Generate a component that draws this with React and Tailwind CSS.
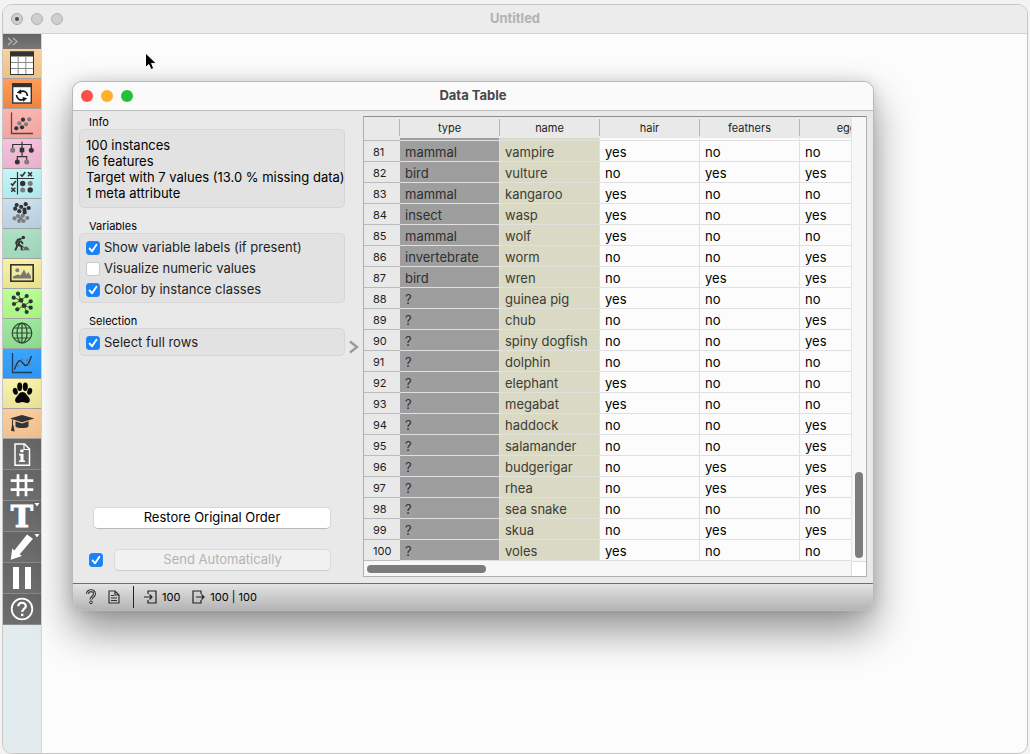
const VARIABLES = ["type", "name", "hair", "feathers", "eggs"];

const ROWS = [
  [81, "mammal", "vampire", "yes", "no", "no"],
  [82, "bird", "vulture", "no", "yes", "yes"],
  [83, "mammal", "kangaroo", "yes", "no", "no"],
  [84, "insect", "wasp", "yes", "no", "yes"],
  [85, "mammal", "wolf", "yes", "no", "no"],
  [86, "invertebrate", "worm", "no", "no", "yes"],
  [87, "bird", "wren", "no", "yes", "yes"],
  [88, "?", "guinea pig", "yes", "no", "no"],
  [89, "?", "chub", "no", "no", "yes"],
  [90, "?", "spiny dogfish", "no", "no", "yes"],
  [91, "?", "dolphin", "no", "no", "no"],
  [92, "?", "elephant", "yes", "no", "no"],
  [93, "?", "megabat", "yes", "no", "no"],
  [94, "?", "haddock", "no", "no", "yes"],
  [95, "?", "salamander", "no", "no", "yes"],
  [96, "?", "budgerigar", "no", "yes", "yes"],
  [97, "?", "rhea", "no", "yes", "yes"],
  [98, "?", "sea snake", "no", "no", "no"],
  [99, "?", "skua", "no", "yes", "yes"],
  [100, "?", "voles", "yes", "no", "no"],
];

const DARK = "#333333";
const GRAY = "#7d7d7d";

function Dots({ points, r, fill }) {
  return points.map(([x, y]) => (
    <circle key={`${x}-${y}`} cx={x} cy={y} r={r} fill={fill} />
  ));
}

const CATEGORIES = [
  {
    label: "Data",
    tone: "from-[#fad09c] to-[#f0c086]",
    icon: (
      <>
        <rect x="7.5" y="3" width="23" height="22.5" fill="#fff" stroke={DARK} />
        <rect x="7" y="2.5" width="24" height="5" fill={DARK} />
        <path d="M15.2 8v17M22.8 8v17M8 13.5h22M8 19.5h22" stroke="#8a8a8a" />
      </>
    ),
  },
  {
    label: "Transform",
    tone: "from-[#ff9d5a] to-[#ee8641]",
    icon: (
      <>
        <rect x="9.7" y="5" width="18.6" height="19" fill="#fff" stroke={DARK} strokeWidth="1.4" />
        <rect x="9" y="4.2" width="20" height="4" fill={DARK} />
        <path
          d="M17 12.8c3.500-1.500 7-.5 7.500 4.200M21 20.200c-3.500 1.500-7 .5-7.500-4.200"
          fill="none"
          stroke="#111"
          strokeWidth="1.700"
        />
        <path d="M17.800 10.200l.6 4.800-4.600-1.300zM20.200 22.800l-.6-4.800 4.600 1.300z" fill="#111" />
      </>
    ),
  },
  {
    label: "Visualize",
    tone: "from-[#fcb5b0] to-[#f3a6a1]",
    icon: (
      <>
        <path d="M8.500 3.500v21h21.500" fill="none" stroke="#6b3d3b" strokeWidth="1.300" />
        <Dots r={2.1} fill={GRAY} points={[[16.3, 14.3], [23, 15.3], [26.3, 10.3]]} />
        <Dots r={2.1} fill={DARK} points={[[13.3, 19.3], [19, 18.3], [20, 10.7]]} />
      </>
    ),
  },
  {
    label: "Model",
    tone: "from-[#f5c2dc] to-[#ecb3d0]",
    icon: (
      <>
        <path
          d="M19 2.700v8M9.700 9V5.500h18.600V9M19 13v4.500M14.300 21v-3.300h9.400V21"
          fill="none"
          stroke={DARK}
          strokeWidth="1.200"
        />
        <rect x="16.700" y="8.700" width="4.600" height="4.600" fill={DARK} />
        <Dots r={2.5} fill={GRAY} points={[[9.7, 11.3], [23.7, 23]]} />
        <Dots r={2.5} fill={DARK} points={[[28.3, 11.3], [14.3, 23]]} />
      </>
    ),
  },
  {
    label: "Evaluate",
    tone: "from-[#c4f5f7] to-[#b2eaee]",
    icon: (
      <>
        <path d="M14.500 3v22.500M7 9.500h24" stroke={DARK} strokeWidth="1.200" />
        <path
          d="M17.500 5.500l1.600 1.800 3.200-4.200M25 3.300l4 4M29 3.300l-4 4M8 14.500l1.600 1.800 3.200-4.200M8.300 18.700l4 4M12.300 18.700l-4 4"
          fill="none"
          stroke={DARK}
          strokeWidth="1.600"
        />
        <Dots r={2.7} fill={DARK} points={[[19.7, 14.5], [27.2, 21]]} />
        <Dots r={2.5} fill={GRAY} points={[[27.2, 14.5], [19.7, 21]]} />
      </>
    ),
  },
  {
    label: "Unsupervised",
    tone: "from-[#cbdfed] to-[#bbd0e0]",
    icon: (
      <>
        <Dots
          r={2.1}
          fill={GRAY}
          points={[[19.7, 16.7], [15, 17], [11.5, 19.3], [24.3, 19], [16, 22], [20.5, 22], [17.7, 19.5]]}
        />
        <Dots
          r={2.1}
          fill={DARK}
          points={[[13.7, 6], [22.7, 5.2], [18.2, 7.8], [12.2, 9.7], [25.7, 9], [16.3, 12.2], [21.5, 10.7], [21.7, 13.3]]}
        />
      </>
    ),
  },
  {
    label: "Spectroscopy",
    tone: "from-[#addfc5] to-[#9fd8ba]",
    icon: (
      <>
        <circle cx="20.300" cy="8.500" r="1.800" fill={DARK} />
        <path
          d="M18.500 9.700l-3.800 1.100-1.600 3.400 1.300 2.300-2.200 4.900M16.500 11.500l-.8 4.500 2.800 1.400.3 4M17.500 11.700l2.500 3.300"
          fill="none"
          stroke={DARK}
          strokeWidth="1.900"
        />
        <path d="M12.500 12.500l10 7" stroke={DARK} strokeWidth=".9" />
        <path d="M19.500 21.300l3.500-4.300 2.500 2 1.300 2.300z" fill="#666" />
      </>
    ),
  },
  {
    label: "Image Analytics",
    tone: "from-[#f8f1a6] to-[#ece391]",
    icon: (
      <>
        <rect x="7.800" y="5.800" width="22.400" height="16.400" fill="none" stroke={DARK} strokeWidth="1.600" />
        <circle cx="14.300" cy="11.300" r="2" fill={GRAY} />
        <path d="M10 19.500v-2l5-2 2.500 1 3.500-6 2.500 5 1.800-2.500 2.700 4.500v2z" fill="#777" />
      </>
    ),
  },
  {
    label: "Networks",
    tone: "from-[#bbff97] to-[#abf485]",
    icon: (
      <>
        <path
          d="M18 11.300L15 4.700M18 11.300L23.700 7M18 11.300L10.700 8.700M18 11.300L11 15M18 11.300L21 16.700M21 16.700L27.700 12.300M21 16.700L14.300 20.300M21 16.700L27.700 18.700M21 16.700L23.700 23"
          stroke={DARK}
          strokeWidth=".8"
        />
        <Dots r={2.4} fill={DARK} points={[[18, 11.3], [21, 16.7]]} />
        <Dots
          r={2.1}
          fill={DARK}
          points={[[15, 4.7], [23.7, 7], [10.7, 8.7], [27.7, 12.3], [11, 15], [14.3, 20.3], [27.7, 18.7], [23.7, 23]]}
        />
      </>
    ),
  },
  {
    label: "Geo",
    tone: "from-[#a1e8a1] to-[#8edb90]",
    icon: (
      <g fill="none" stroke="#2f4a30" strokeWidth="1.200">
        <circle cx="19" cy="14" r="9.800" />
        <ellipse cx="19" cy="14" rx="5" ry="9.800" />
        <path d="M19 4.200v19.600M9.200 14h19.600M10.500 9h17M10.500 19h17" />
      </g>
    ),
  },
  {
    label: "Time Series",
    tone: "from-[#3aa5ff] to-[#2f98f5]",
    icon: (
      <>
        <path d="M9.500 4v19.500H29" fill="none" stroke="#1d3d5c" strokeWidth="1.300" />
        <path d="M10 17.500c3-3 6-6.500 9-4s4 2 8 3" fill="none" stroke="#6c7f92" />
        <path
          d="M11.500 20.500c1.500-4 3-8.800 5.200-8.800 2.800 0 3.500 4.800 6.300 4.800 2.500 0 3.500-5 5.500-9.500"
          fill="none"
          stroke="#1f2f40"
          strokeWidth="1.300"
        />
        <Dots r={1.2} fill="#68798a" points={[[15, 17], [19, 10.5], [24, 11], [26.5, 15.5]]} />
      </>
    ),
  },
  {
    label: "Bioinformatics",
    tone: "from-[#f8f2ac] to-[#ece398]",
    icon: (
      <g fill="#050505">
        <ellipse cx="12.300" cy="12.300" rx="2.400" ry="3.500" transform="rotate(-15 12.300 12.300)" />
        <ellipse cx="16.700" cy="7.800" rx="2.500" ry="4.200" />
        <ellipse cx="22.300" cy="7.800" rx="2.500" ry="4.200" />
        <ellipse cx="26.700" cy="12.300" rx="2.400" ry="3.500" transform="rotate(15 26.700 12.300)" />
        <path d="M19.500 13c3.200 0 4 3 5.800 4.800 2.700 2.800 1.700 6.200-1.300 6.200-1.700 0-2.700-.9-4.500-.9s-2.800.9-4.500.9c-3 0-4-3.400-1.300-6.200C15.500 16 16.300 13 19.500 13z" />
      </g>
    ),
  },
  {
    label: "Educational",
    tone: "from-[#fbcd9e] to-[#f0c090]",
    icon: (
      <>
        <path d="M19 6l12.300 3.500L19 13.300 7 9.500z" fill={DARK} />
        <path d="M12.500 12.300v5.200c2 2 11 2 13 0v-5.200L19 14.600z" fill={DARK} />
        <path d="M9.500 10.500v7" stroke={DARK} strokeWidth="1.100" />
        <path d="M9 16.500h1.600l1 6-3.600-.7z" fill={DARK} />
      </>
    ),
  },
];

const TOOLS = [
  {
    label: "Workflow info",
    icon: (
      <>
        <path d="M12 5h9.500l5 5v16.300H12z" fill="none" stroke="#fff" strokeWidth="1.500" />
        <path d="M21 5v5.500h5.500" fill="none" stroke="#fff" strokeWidth="1.200" />
        <path d="M17.300 10.500h3.200v2.800h-3.200zM16 14.800h4.500v6.700H22v1.600h-6v-1.600h1.500v-5H16z" fill="#fff" />
      </>
    ),
  },
  {
    label: "Align to grid",
    icon: <path d="M15 4.300v22M23 4.300v22M7.700 10.700h22.600M7.700 19.700h22.600" stroke="#fff" strokeWidth="2.700" />,
  },
  {
    label: "Text annotation",
    icon: (
      <>
        <text
          x="19"
          y="26"
          textAnchor="middle"
          fill="#fff"
          stroke="#fff"
          strokeWidth="1"
          fontFamily="'DejaVu Serif', serif"
          fontWeight="bold"
          fontSize="30"
        >
          T
        </text>
        <path d="M31.500 2h5l-2.500 3.500z" fill="#fff" />
      </>
    ),
  },
  {
    label: "Arrow annotation",
    icon: (
      <>
        <path d="M24 2.500l6 4.300-13.300 15.400 2.200 1.900L7.700 27.700 9.300 16.500l2 1.900z" fill="#fff" />
        <path d="M31.500 2h5l-2.500 3.500z" fill="#fff" />
      </>
    ),
  },
  {
    label: "Pause",
    icon: <path d="M10 4h6v22h-6zM22 4h6v22h-6z" fill="#fff" />,
  },
  {
    label: "Help",
    icon: (
      <>
        <circle cx="19" cy="15" r="10.300" fill="none" stroke="#fff" strokeWidth="1.800" />
        <path
          d="M15.300 12.300c0-4.700 7.500-4.700 7.500-.3 0 3-3.600 2.800-3.600 6"
          fill="none"
          stroke="#fff"
          strokeWidth="2.200"
        />
        <rect x="18" y="19.700" width="2.400" height="2.400" fill="#fff" />
      </>
    ),
  },
];

function Sidebar() {
  return (
    <nav className="flex w-[39px] shrink-0 flex-col border-r border-[#d3d6d7] bg-[#e2ebed]">
      <button
        aria-label="Expand toolbox"
        className="h-[15px] bg-gradient-to-b from-[#646464] to-[#787878] pl-1"
      >
        <svg className="block" width="12" height="9" viewBox="0 0 12 9" fill="none" stroke="#b5b5b5" strokeWidth="1.200">
          <path d="M1 1l4 3.500L1 8M6 1l4 3.500L6 8" />
        </svg>
      </button>
      {CATEGORIES.map(({ label, tone, icon }) => (
        <button
          key={label}
          aria-label={label}
          className={`h-[30px] border-b border-[#a3a3a3] bg-gradient-to-b ${tone}`}
        >
          <svg className="block" width="38" height="29" viewBox="0 0 38 29">
            {icon}
          </svg>
        </button>
      ))}
      {TOOLS.map(({ label, icon }) => (
        <button
          key={label}
          aria-label={label}
          className="h-[31px] border-b border-[#8a8a8a] bg-gradient-to-b from-[#666666] to-[#6e6e6e]"
        >
          <svg className="block overflow-visible" width="38" height="30" viewBox="0 0 38 30">
            {icon}
          </svg>
        </button>
      ))}
    </nav>
  );
}

function Checkbox({ label, hiddenLabel, defaultChecked }) {
  return (
    <label className="flex h-[21px] items-center gap-1">
      <span className="grid h-3.5 w-3.5">
        <input
          type="checkbox"
          aria-label={hiddenLabel}
          defaultChecked={defaultChecked}
          className="peer col-start-1 row-start-1 h-3.5 w-3.5 appearance-none rounded-[3px] border border-[#c9c9c9] bg-white checked:border-[#2b86ee] checked:bg-[#1583fb]"
        />
        <svg
          className="pointer-events-none col-start-1 row-start-1 hidden peer-checked:block"
          width="14"
          height="14"
          viewBox="0 0 14 14"
          fill="none"
          stroke="#fff"
          strokeWidth="1.900"
          strokeLinecap="round"
          strokeLinejoin="round"
        >
          <path d="M3.600 7.500l2.500 2.800 4.300-6.600" />
        </svg>
      </span>
      {label}
    </label>
  );
}

function Group({ title, className, children }) {
  return (
    <section>
      <h2 className="pl-2.5 text-[11px] leading-[14px] text-black">{title}</h2>
      <div className={`rounded-[5px] border border-[#d6d6d6] bg-[#e2e2e2] px-1.5 ${className}`}>
        {children}
      </div>
    </section>
  );
}

function Controls() {
  return (
    <div className="flex w-[266px] flex-col gap-[11px] pt-1 pb-3">
      <Group title="Info" className="pt-[7px] pb-1.5 leading-4 text-black">
        <p>100 instances</p>
        <p>16 features</p>
        <p className="whitespace-nowrap">Target with 7 values (13.0 % missing data)</p>
        <p>1 meta attribute</p>
      </Group>
      <Group title="Variables" className="pt-[3px] pb-0.5">
        <Checkbox label="Show variable labels (if present)" defaultChecked />
        <Checkbox label="Visualize numeric values" />
        <Checkbox label="Color by instance classes" defaultChecked />
      </Group>
      <Group title="Selection" className="pt-[3px] pb-0.5">
        <Checkbox label="Select full rows" defaultChecked />
      </Group>
      <div className="mt-auto mr-3.5 flex flex-col gap-5">
        <button className="ml-3.5 h-[22px] rounded-[5px] border border-[#d8d8d8] border-b-[#b9b9b9] bg-white text-black">
          Restore Original Order
        </button>
        <div className="flex items-center gap-[11px] pl-2.5">
          <Checkbox hiddenLabel="Send automatically" defaultChecked />
          <button
            disabled
            className="h-[22px] flex-1 rounded-[5px] border border-[#dadada] border-b-[#cacaca] bg-[#f1f1f1] text-[#b3b3b3]"
          >
            Send Automatically
          </button>
        </div>
      </div>
    </div>
  );
}

function DataGrid() {
  return (
    <div className="mt-[5px] mr-1.5 mb-1.5 flex min-w-0 flex-1 flex-col border border-[#b0b0b0] border-t-[#8c8c8c] bg-[#fcfcfc]">
      <div className="flex">
        <div className="min-w-0 flex-1 overflow-hidden">
          <table className="w-[536px] table-fixed border-separate border-spacing-0 text-left">
            <colgroup>
              <col className="w-9" />
              <col span={5} className="w-[100px]" />
            </colgroup>
            <thead className="bg-[#e9e9e9] text-[11px]">
              <tr className="h-[21px]">
                <td className="py-0.5">
                  <div className="h-[17px] border-r border-[#b5b5b5]" />
                </td>
                {VARIABLES.map((name) => (
                  <th key={name} className="py-0.5 font-normal">
                    <div className="h-[17px] border-r border-[#b5b5b5] text-center leading-[18px]">
                      {name}
                    </div>
                  </th>
                ))}
              </tr>
            </thead>
            <tbody>
              <tr className="h-[3px]">
                <td className="border-b border-[#bcbcbc] bg-[#e9e9e9]" />
                <td className="border-r border-b border-[#e0e0e0] bg-[#9e9e9e]" />
                <td className="border-r border-b border-[#e0e0e0] bg-[#d9d9c4]" />
                <td className="border-r border-b border-[#e0e0e0]" />
                <td className="border-r border-b border-[#e0e0e0]" />
                <td className="border-r border-b border-[#e0e0e0]" />
              </tr>
              {ROWS.map(([index, type, name, ...values]) => (
                <tr key={index} className="h-[21px] leading-[18px]">
                  <th className="border-b border-[#bcbcbc] bg-[#e9e9e9] pt-0.5 pl-[9px] text-[11px] font-normal">
                    {index}
                  </th>
                  <td className="border-r border-b border-[#e0e0e0] bg-[#9e9e9e] pt-0.5 pl-[5px] text-[#2e2e2e]">
                    {type}
                  </td>
                  <td className="border-r border-b border-[#e0e0e0] bg-[#d9d9c4] pt-0.5 pl-[5px] text-[#3c3c36]">
                    {name}
                  </td>
                  {values.map((value, i) => (
                    <td key={i} className="border-r border-b border-[#e0e0e0] pt-0.5 pl-[5px] text-black">
                      {value}
                    </td>
                  ))}
                </tr>
              ))}
            </tbody>
          </table>
        </div>
        <div className="flex w-[15px] flex-col justify-end border-l border-[#e4e4e4] bg-[#f7f7f7] px-[3px] pb-[3px]">
          <div className="h-[86px] rounded-full bg-[#7c7c7c]" />
        </div>
      </div>
      <div className="flex h-[15px]">
        <div className="flex-1 bg-[#f7f7f7] px-[3px] pt-1">
          <div className="h-2 w-[119px] rounded-full bg-[#7c7c7c]" />
        </div>
        <div className="w-[15px] border-t border-l border-[#dcdcdc] bg-white" />
      </div>
    </div>
  );
}

function StatusBar() {
  return (
    <footer className="flex h-[27px] items-center border-t border-[#6e6e6e] bg-gradient-to-b from-[#e3e3e3] to-[#b4b4b4] pl-3 text-[11px] text-black">
      <button aria-label="Help" className="mr-[11px]">
        <svg className="block" width="12" height="16" viewBox="0 0 12 16">
          <path
            d="M2.500 5c0-4.500 7-4.500 7 0 0 2.800-3.500 2.600-3.500 5.500"
            fill="none"
            stroke="#333"
            strokeWidth="3"
          />
          <path
            d="M2.500 5c0-4.500 7-4.500 7 0 0 2.800-3.500 2.600-3.500 5.500"
            fill="none"
            stroke="#d0d0d0"
            strokeWidth="1"
          />
          <circle cx="6" cy="13.300" r="1.400" fill="#c4c4c4" stroke="#333" />
        </svg>
      </button>
      <button aria-label="Report" className="mr-[13px]">
        <svg className="block" width="12" height="14" viewBox="0 0 12 14" fill="none" stroke="#333" strokeWidth="1.200">
          <path d="M1 1h6l4 4v8H1zM7 1v4h4" />
          <path d="M3 5.500h3M3 8h6M3 10.500h6" />
        </svg>
      </button>
      <span className="h-[22px] w-px bg-[#222]" />
      <svg className="ml-2.5" width="13" height="14" viewBox="0 0 13 14" fill="none" stroke="#222" strokeWidth="1.200">
        <path d="M4 4V1h8v12H4v-3M0 7h8M5.500 4.500L8 7 5.500 9.500" />
      </svg>
      <span className="ml-[5px]">100</span>
      <svg className="ml-3" width="13" height="14" viewBox="0 0 13 14" fill="none" stroke="#222" strokeWidth="1.200">
        <path d="M9 4V1H1v12h8v-3M4 7h8M9.500 4.500L12 7 9.500 9.500" />
      </svg>
      <span className="ml-[5px]">100 | 100</span>
    </footer>
  );
}

function DataTableWindow() {
  return (
    <div className="absolute top-[47px] left-[30px] w-[802px] overflow-hidden rounded-[10px] border border-[#b9b9b9] bg-[#e9e9e9] text-[13px] text-[#1e1e1e] shadow-[0_20px_40px_rgba(0,0,0,0.42),0_0_14px_rgba(0,0,0,0.12)]">
      <header className="flex h-[29px] items-center border-b border-[#bcbcbc] bg-[#fafafa] px-2">
        <div className="flex flex-1 gap-2">
          <button aria-label="Close" className="h-3 w-3 rounded-full bg-[#fb4f48]" />
          <button aria-label="Minimize" className="h-3 w-3 rounded-full bg-[#fdb02b]" />
          <button aria-label="Zoom" className="h-3 w-3 rounded-full bg-[#24c138]" />
        </div>
        <h1 className="font-bold text-[#484848]">Data Table</h1>
        <div className="flex-1" />
      </header>
      <div className="flex pl-1.5">
        <Controls />
        <button aria-label="Hide controls" className="flex w-[18px] items-center justify-center">
          <svg width="10" height="14" viewBox="0 0 10 14" fill="none" stroke="#9c9c9c" strokeWidth="2.600">
            <path d="M1 1.500L8 7l-7 5.500" />
          </svg>
        </button>
        <DataGrid />
      </div>
      <StatusBar />
    </div>
  );
}

export default function App() {
  return (
    <div className="flex min-h-screen bg-[#f3f3f3] px-0.5 pt-1 font-['Inter','Liberation_Sans',sans-serif]">
      <div className="flex flex-1 flex-col overflow-hidden rounded-[10px] border border-[#c6c6c6] bg-[#fcfcfc]">
        <header className="flex h-[29px] shrink-0 items-center border-b border-[#d2d2d2] bg-[#ececec] px-2">
          <div className="flex flex-1 gap-2">
            <button
              aria-label="Close"
              className="flex h-3 w-3 items-center justify-center rounded-full border border-[#a9a9a9] bg-[#cfcfcf]"
            >
              <span className="h-1 w-1 rounded-full bg-[#4a4a4a]" />
            </button>
            <button aria-label="Minimize" className="h-3 w-3 rounded-full border border-[#b0b0b0] bg-[#cfcfcf]" />
            <button aria-label="Zoom" className="h-3 w-3 rounded-full border border-[#b0b0b0] bg-[#cfcfcf]" />
          </div>
          <h1 className="text-[13px] font-bold text-[#b2b2b2]">Untitled</h1>
          <div className="flex-1" />
        </header>
        <div className="flex flex-1">
          <Sidebar />
          <main className="relative flex-1">
            <svg className="absolute top-[18px] left-[102px]" width="14" height="20" viewBox="0 0 14 20">
              <path
                d="M1.500 1v14.500l3.300-3 2.200 5 2.700-1.100-2.100-5h4.700z"
                fill="#000"
                stroke="#fff"
                strokeWidth="1"
              />
            </svg>
            <DataTableWindow />
          </main>
        </div>
      </div>
    </div>
  );
}
